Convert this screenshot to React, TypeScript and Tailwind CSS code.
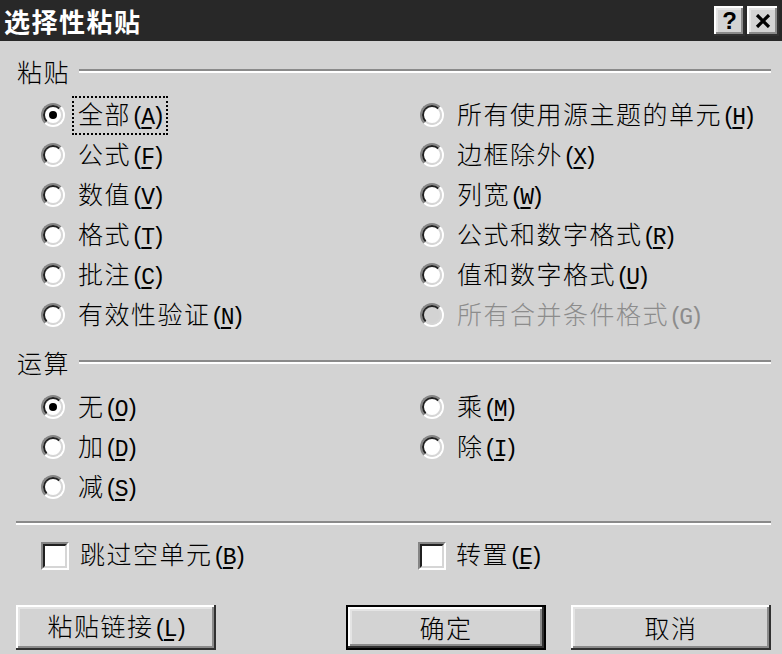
import React from "react"

const raised =
  "shadow-[inset_-2px_-2px_0_#303030,inset_2px_2px_0_#ffffff,inset_-4px_-4px_0_#8a8a8a,inset_4px_4px_0_#e4e4e4]"

function Radio({ checked = false, disabled = false }: { checked?: boolean; disabled?: boolean }) {
  return (
    <div className="w-[24px] h-[24px] rounded-full border-2 border-t-[#858585] border-l-[#858585] border-b-white border-r-white shrink-0">
      <div
        className={
          "w-full h-full rounded-full border-2 border-t-[#202020] border-l-[#202020] border-b-[#d6d6d6] border-r-[#d6d6d6] flex items-center justify-center " +
          (disabled ? "bg-[#d3d3d3]" : "bg-white")
        }
      >
        {checked && <div className="w-[8px] h-[8px] rounded-full bg-black" />}
      </div>
    </div>
  )
}

function Check() {
  return (
    <div className="w-[28px] h-[28px] border-2 border-t-[#858585] border-l-[#858585] border-b-white border-r-white shrink-0">
      <div className="w-full h-full border-2 border-t-[#202020] border-l-[#202020] border-b-[#d6d6d6] border-r-[#d6d6d6] bg-white" />
    </div>
  )
}

function Label({ text, k, disabled = false }: { text: string; k: string; disabled?: boolean }) {
  return (
    <span className={"text-[25px] leading-none tracking-[1.5px] font-light " + (disabled ? "text-[#8c8c8c]" : "")}>
      {text}
      <span className="font-['Liberation_Mono',monospace] font-normal text-[23px] tracking-[-3.5px]">
        (<span className={disabled ? "" : "underline underline-offset-[3px]"}>{k}</span>)
      </span>
    </span>
  )
}

function Option({
  text,
  k,
  checked,
  disabled,
  focus,
}: {
  text: string
  k: string
  checked?: boolean
  disabled?: boolean
  focus?: boolean
}) {
  return (
    <div className="h-[40px] flex items-center">
      <Radio checked={checked} disabled={disabled} />
      <div className={"ml-[9px] px-[4px] py-[3px] " + (focus ? "outline-2 outline-dotted outline-black" : "")}>
        <Label text={text} k={k} disabled={disabled} />
      </div>
    </div>
  )
}

function GroupHeader({ title }: { title: string }) {
  return (
    <div className="h-[24px] flex items-center pl-[17px] pr-[11px]">
      <span className="text-[25px] leading-none tracking-[1.5px] font-light">{title}</span>
      <div className="flex-1 ml-[9px] border-t-2 border-t-[#8a8a8a] border-b-2 border-b-white" />
    </div>
  )
}

export default function App() {
  return (
    <div className="w-[782px] h-[654px] bg-[#d3d3d3] text-black flex flex-col font-['Noto_Sans_CJK_SC',sans-serif] overflow-hidden">
      {/* title bar */}
      <div className="h-[41px] bg-[#282828] flex items-center pl-[4px] pr-[3px]">
        <span className="text-white font-bold text-[26px] leading-none tracking-[1.5px]">选择性粘贴</span>
        <div className="ml-auto flex gap-[2px]">
          <div className={"w-[31px] h-[30px] bg-[#d3d3d3] flex items-center justify-center text-[24px] font-bold leading-none font-['Liberation_Sans',sans-serif] " + raised}>
            ?
          </div>
          <div className={"w-[32px] h-[30px] bg-[#d3d3d3] flex items-center justify-center " + raised}>
            <svg width="16" height="14" viewBox="0 0 16 14">
              <path d="M2 1 L14 13 M14 1 L2 13" stroke="black" strokeWidth="3.2" />
            </svg>
          </div>
        </div>
      </div>

      <div className="mt-[18px]">
        <GroupHeader title="粘贴" />
      </div>
      <div className="mt-[12px] flex pl-[41px]">
        <div className="w-[379px]">
          <Option text="全部" k="A" checked focus />
          <Option text="公式" k="F" />
          <Option text="数值" k="V" />
          <Option text="格式" k="T" />
          <Option text="批注" k="C" />
          <Option text="有效性验证" k="N" />
        </div>
        <div>
          <Option text="所有使用源主题的单元" k="H" />
          <Option text="边框除外" k="X" />
          <Option text="列宽" k="W" />
          <Option text="公式和数字格式" k="R" />
          <Option text="值和数字格式" k="U" />
          <Option text="所有合并条件格式" k="G" disabled />
        </div>
      </div>

      <div className="mt-[15px]">
        <GroupHeader title="运算" />
      </div>
      <div className="mt-[13px] flex pl-[41px]">
        <div className="w-[379px]">
          <Option text="无" k="O" checked />
          <Option text="加" k="D" />
          <Option text="减" k="S" />
        </div>
        <div>
          <Option text="乘" k="M" />
          <Option text="除" k="I" />
        </div>
      </div>

      <div className="mt-[14px] ml-[16px] mr-[11px] border-t-2 border-t-[#8a8a8a] border-b-2 border-b-white" />

      <div className="mt-[16px] flex items-center">
        <div className="w-[418px] pl-[41px] flex items-center">
          <Check />
          <div className="ml-[11px]">
            <Label text="跳过空单元" k="B" />
          </div>
        </div>
        <div className="flex items-center">
          <Check />
          <div className="ml-[10px]">
            <Label text="转置" k="E" />
          </div>
        </div>
      </div>

      <div className="mt-[35px] flex pl-[16px]">
        <div className={"w-[200px] h-[45px] flex items-center justify-center " + raised}>
          <Label text="粘贴链接" k="L" />
        </div>
        <div className="ml-[130px] w-[200px] h-[45px] border-2 border-black">
          <div className={"w-full h-full flex items-center justify-center text-[25px] tracking-[1.5px] font-light " + raised}>
            确定
          </div>
        </div>
        <div className={"ml-[25px] w-[200px] h-[45px] flex items-center justify-center text-[25px] tracking-[1.5px] font-light " + raised}>
          取消
        </div>
      </div>
    </div>
  )
}
